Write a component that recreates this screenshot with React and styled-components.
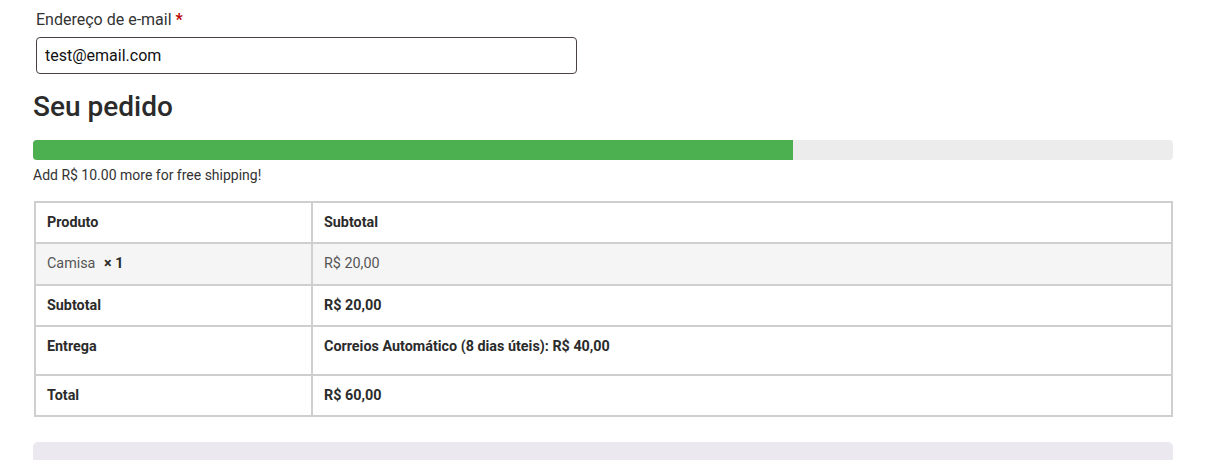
import React from 'react';
import styled, { createGlobalStyle } from 'styled-components';

const GlobalStyle = createGlobalStyle`
  body {
    margin: 0;
    background: #fff;
    font-family: Roboto, 'Liberation Sans', sans-serif;
    color: #333;
  }
`;

const Page = styled.div`
  width: 1140px;
  padding: 8px 0 0 33px;
`;

const Field = styled.div`
  display: flex;
  flex-direction: column;
  padding: 0 3px;
`;

const Label = styled.label`
  font-size: 16px;
  line-height: 24px;
  color: #333;
  margin-bottom: 5px;
`;

const Required = styled.span`
  color: #b00;
  font-weight: 700;
`;

const Input = styled.input`
  box-sizing: border-box;
  width: 541px;
  height: 37px;
  border: 1px solid #4a4043;
  border-radius: 4px;
  padding: 0 8px;
  font-family: inherit;
  font-size: 16px;
  color: #111;
  outline: none;
`;

const Heading = styled.h3`
  margin: 17px 0 0;
  font-size: 28px;
  line-height: 32px;
  font-weight: 500;
  color: #2b2b2b;
`;

const Progress = styled.div`
  margin-top: 17px;
  height: 20px;
  background: #ececec;
  border-radius: 4px;
  overflow: hidden;
`;

const ProgressFill = styled.div`
  height: 100%;
  background: #4caf50;
`;

const Notice = styled.p`
  margin: 5px 0 0;
  font-size: 14px;
  line-height: 20px;
  color: #333;
`;

const Table = styled.table`
  margin-top: 16px;
  margin-left: 1px;
  width: 1139px;
  border-collapse: collapse;
  border: 2px solid #cfcfcf;
  font-size: 14.35px;
`;

const Row = styled.tr`
  background: ${p => (p.$shade ? '#f5f5f5' : '#fff')};
`;

const Cell = styled.td`
  border: 2px solid #cfcfcf;
  padding: 11px 11px ${p => p.$pb || 11}px;
  line-height: 17px;
  vertical-align: top;
  text-align: left;
  font-weight: ${p => (p.$bold ? 700 : 400)};
  color: ${p => (p.$bold ? '#2b2b2b' : '#555')};
  width: ${p => p.$w || 'auto'};
`;

const Qty = styled.strong`
  margin-left: 5px;
  color: #2b2b2b;
`;

const Panel = styled.div`
  margin-top: 25px;
  height: 30px;
  background: #ebe9ef;
  border-radius: 5px 5px 0 0;
`;

const App = () => {
  const subtotal = 20;
  const threshold = 30;
  const percent = (subtotal / threshold) * 100;

  return (
    <Page>
      <GlobalStyle />
      <Field>
        <Label htmlFor="email">
          Endereço de e-mail <Required>*</Required>
        </Label>
        <Input id="email" type="email" defaultValue="test@email.com" />
      </Field>

      <Heading>Seu pedido</Heading>

      <Progress>
        <ProgressFill style={{ width: `${percent}%` }} />
      </Progress>
      <Notice>Add R$ 10.00 more for free shipping!</Notice>

      <Table>
        <tbody>
          <Row>
            <Cell as="th" $bold $w="253px">Produto</Cell>
            <Cell as="th" $bold>Subtotal</Cell>
          </Row>
          <Row $shade>
            <Cell $pb={12}>Camisa <Qty>× 1</Qty></Cell>
            <Cell $pb={12}>R$ 20,00</Cell>
          </Row>
          <Row>
            <Cell as="th" $bold>Subtotal</Cell>
            <Cell $bold>R$ 20,00</Cell>
          </Row>
          <Row>
            <Cell as="th" $bold $pb={19}>Entrega</Cell>
            <Cell $bold $pb={19}>Correios Automático (8 dias úteis): R$ 40,00</Cell>
          </Row>
          <Row>
            <Cell as="th" $bold>Total</Cell>
            <Cell $bold>R$ 60,00</Cell>
          </Row>
        </tbody>
      </Table>

      <Panel />
    </Page>
  );
};

export default App;
